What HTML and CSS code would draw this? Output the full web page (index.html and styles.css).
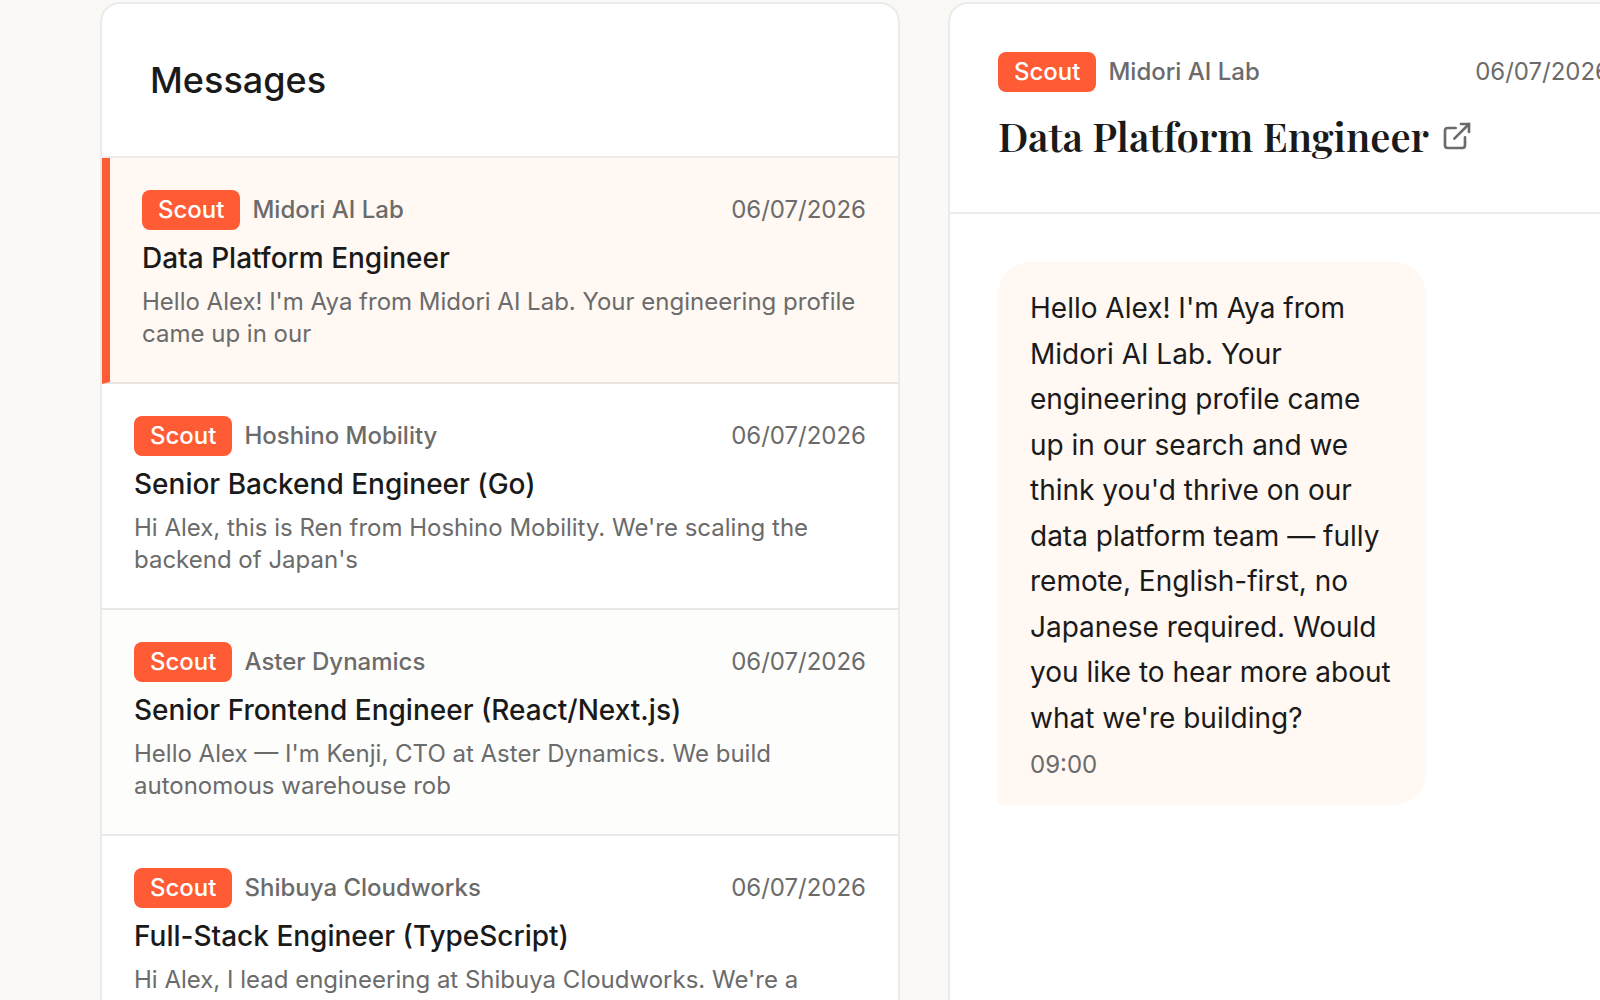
FILE: index.html
```html
<!DOCTYPE html>
<html lang="en">
<head>
    <meta charset="UTF-8">
    <title>Messages</title>
    <link rel="stylesheet" href="styles.css">
</head>
<body>

<main class="inbox">
    <section class="card">
        <div class="list-header">
            <h1>Messages</h1>
        </div>

        <button type="button" class="thread active">
            <span class="meta">
                <span class="badge">Scout</span>
                <span class="company">Midori AI Lab</span>
                <span class="date">06/07/2026</span>
            </span>
            <span class="thread-title">Data Platform Engineer</span>
            <span class="preview">Hello Alex! I'm Aya from Midori AI Lab. Your engineering profile came up in our</span>
        </button>

        <button type="button" class="thread">
            <span class="meta">
                <span class="badge">Scout</span>
                <span class="company">Hoshino Mobility</span>
                <span class="date">06/07/2026</span>
            </span>
            <span class="thread-title">Senior Backend Engineer (Go)</span>
            <span class="preview">Hi Alex, this is Ren from Hoshino Mobility. We're scaling the backend of Japan's</span>
        </button>

        <button type="button" class="thread highlight">
            <span class="meta">
                <span class="badge">Scout</span>
                <span class="company">Aster Dynamics</span>
                <span class="date">06/07/2026</span>
            </span>
            <span class="thread-title">Senior Frontend Engineer (React/Next.js)</span>
            <span class="preview">Hello Alex — I'm Kenji, CTO at Aster Dynamics. We build autonomous warehouse rob</span>
        </button>

        <button type="button" class="thread">
            <span class="meta">
                <span class="badge">Scout</span>
                <span class="company">Shibuya Cloudworks</span>
                <span class="date">06/07/2026</span>
            </span>
            <span class="thread-title">Full-Stack Engineer (TypeScript)</span>
            <span class="preview">Hi Alex, I lead engineering at Shibuya Cloudworks. We're a</span>
        </button>
    </section>

    <section class="card">
        <div class="detail-header">
            <div class="meta">
                <span class="badge">Scout</span>
                <span class="company">Midori AI Lab</span>
                <span class="date">06/07/2026</span>
            </div>
            <div class="detail-title">
                <h2>Data Platform Engineer</h2>
                <a href="#" class="open-link" aria-label="Open job">
                    <svg viewBox="0 0 24 24" width="32" height="32" fill="none" stroke="currentColor" stroke-width="2" stroke-linecap="round" stroke-linejoin="round">
                        <path d="M18 13v6a2 2 0 0 1-2 2H5a2 2 0 0 1-2-2V8a2 2 0 0 1 2-2h6"/>
                        <path d="M15 3h6v6"/>
                        <path d="M10 14 21 3"/>
                    </svg>
                </a>
            </div>
        </div>

        <div class="conversation">
            <div class="bubble">
                <p>Hello Alex! I'm Aya from Midori AI Lab. Your engineering profile came up in our search and we think you'd thrive on our data platform team — fully remote, English-first, no Japanese required. Would you like to hear more about what we're building?</p>
                <time>09:00</time>
            </div>
        </div>
    </section>
</main>

</body>
</html>
```

FILE: styles.css
```css
* {
    box-sizing: border-box;
}
body {
    margin: 0;
    overflow: hidden;
    background-color: #faf9f5;
    color: #1a1a1a;
    font-family: Inter, "Liberation Sans", sans-serif;
    font-size: 24px;
    line-height: 32px;
}
h1, h2, p {
    margin: 0;
}

/* the detail column runs past the right edge of the window */
.inbox {
    display: grid;
    grid-template-columns: 50vw 1fr;
    gap: 48px;
    margin: 2px -60px 0 100px;
    min-height: 100vh;
}
.card {
    border: 2px solid #ebebeb;
    border-radius: 20px;
    background-color: #fff;
    overflow: hidden;
}

.list-header {
    padding: 48px;
    border-bottom: 2px solid #ebebeb;
}
.list-header h1 {
    font-size: 36px;
    font-weight: 500;
    line-height: 56px;
}

.thread {
    display: block;
    width: 100%;
    padding: 32px;
    border: 0;
    border-bottom: 2px solid #e8e8e8;
    background-color: #fff;
    color: inherit;
    font: inherit;
    text-align: left;
    cursor: pointer;
}
.thread.active {
    border-left: 8px solid #ff5c35;
    border-bottom-color: #e8e4e0;
    background-color: #fff8f3;
}
.thread.highlight {
    background-color: #fdfdfb;
}
.thread-title {
    display: block;
    margin: 8px 0;
    font-size: 28px;
    font-weight: 500;
    line-height: 40px;
}
.preview {
    display: block;
    min-height: 64px;
    color: #6b6b6b;
}

.meta {
    display: flex;
    align-items: center;
    gap: 12px;
    color: #6b6b6b;
}
.badge {
    padding: 4px 16px;
    border-radius: 8px;
    background-color: #ff5c35;
    color: #fff;
    font-weight: 500;
}
.company {
    font-weight: 500;
}
.date {
    margin-left: auto;
}

.detail-header {
    padding: 48px;
    border-bottom: 2px solid #ebebeb;
}
.detail-title {
    display: flex;
    align-items: center;
    gap: 12px;
    margin-top: 16px;
}
.detail-title h2 {
    font-family: "Playfair Display", "Liberation Serif", serif;
    font-size: 40px;
    font-weight: 600;
    line-height: 56px;
}
.open-link {
    display: flex;
    color: #6b6b6b;
}

.conversation {
    padding: 48px;
}
.bubble {
    max-width: 70%;
    padding: 24px 32px;
    border-radius: 32px 32px 32px 4px;
    background-color: #fff8f3;
}
.bubble p {
    font-size: 28px;
    line-height: 1.625;
}
.bubble time {
    display: block;
    margin-top: 8px;
    color: #6b6b6b;
}
```
